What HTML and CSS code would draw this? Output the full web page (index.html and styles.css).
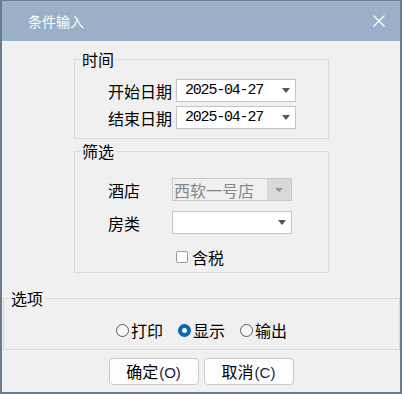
FILE: index.html
```html
<!DOCTYPE html>
<html lang="zh">
<head>
<meta charset="utf-8">
<title>条件输入</title>
<link rel="stylesheet" href="styles.css">
</head>
<body>
<div class="window">
  <div class="titlebar">
    <span class="title">条件输入</span>
    <svg class="close" width="12" height="12" viewBox="0 0 12 12"><path d="M0.5 0.5 L11.5 11.5 M11.5 0.5 L0.5 11.5" stroke="#fff" stroke-width="1.3" fill="none"/></svg>
  </div>
  <div class="content">
    <fieldset class="group group-time">
      <legend>时间</legend>
      <div class="group-body time-body">
        <div class="row date-row">
          <span class="label">开始日期</span>
          <div class="combo"><span class="date">2025-04-27</span><i class="arrow"></i></div>
        </div>
        <div class="row date-row">
          <span class="label">结束日期</span>
          <div class="combo"><span class="date">2025-04-27</span><i class="arrow"></i></div>
        </div>
      </div>
    </fieldset>
    <fieldset class="group group-filter">
      <legend>筛选</legend>
      <div class="group-body filter-body">
        <div class="row filter-row">
          <span class="label">酒店</span>
          <div class="combo combo-disabled"><span class="value">西软一号店</span><span class="drop"><i class="arrow arrow-light"></i></span></div>
        </div>
        <div class="row filter-row">
          <span class="label">房类</span>
          <div class="combo"><span class="value"></span><i class="arrow"></i></div>
        </div>
        <div class="check-row"><span class="checkbox"></span><span>含税</span></div>
      </div>
    </fieldset>
    <fieldset class="group group-options">
      <legend>选项</legend>
      <div class="group-body options-body">
        <span class="radio-item"><span class="radio"></span>打印</span>
        <span class="radio-item"><span class="radio radio-on"></span>显示</span>
        <span class="radio-item"><span class="radio"></span>输出</span>
      </div>
    </fieldset>
    <div class="buttons">
      <button class="btn">确定<span class="key">(O)</span></button>
      <button class="btn">取消<span class="key">(C)</span></button>
    </div>
  </div>
</div>
</body>
</html>
```
FILE: styles.css
```css
* { box-sizing: border-box; }
html, body { margin: 0; padding: 0; }
body {
  width: 402px;
  height: 394px;
  background: #f0f0f0;
  font-family: "Noto Sans CJK SC", "Noto Sans", sans-serif;
  font-size: 16px;
  color: #000;
}
.window {
  width: 402px;
  height: 394px;
  border: 2px solid #6b7c8d;
  border-top-width: 1px;
  background: #f0f0f0;
  display: flex;
  flex-direction: column;
}
.titlebar {
  height: 40px;
  flex: none;
  background: #99b0c8;
  color: #fff;
  font-size: 14px;
  line-height: 20px;
  display: flex;
  align-items: center;
  justify-content: space-between;
  padding: 0 15px 0 26px;
}
.close { display: block; }
.content {
  flex: 1;
  display: flex;
  flex-direction: column;
}
.group {
  border: 1px solid #dadada;
  margin: 0;
  padding: 0;
  min-width: 0;
}
.group legend {
  margin-left: 5px;
  padding: 0 2px;
  font-size: 16px;
  line-height: 20px;
}
.group-time {
  width: 255px;
  margin: 8px 0 0 72px;
}
.time-body {
  padding: 10px 0 9px 33px;
  display: flex;
  flex-direction: column;
  gap: 4px;
}
.row {
  display: grid;
  align-items: center;
  line-height: 20px;
}
.date-row { grid-template-columns: 64px 120px; column-gap: 4px; }
.combo {
  height: 23px;
  border: 1px solid #c4c4c4;
  background: #fff;
  display: flex;
  align-items: center;
  justify-content: space-between;
  padding: 0 5px 0 8px;
}
.date {
  font-family: "Liberation Mono", "DejaVu Sans Mono", monospace;
  font-size: 15px;
  letter-spacing: -1.2px;
  line-height: 20px;
}
.arrow {
  width: 0;
  height: 0;
  border-left: 4px solid transparent;
  border-right: 4px solid transparent;
  border-top: 5px solid #4b584b;
}
.group-filter {
  width: 255px;
  margin: 2px 0 0 72px;
}
.filter-body {
  padding: 17px 0 5px 33px;
  display: flex;
  flex-direction: column;
  gap: 10px;
}
.filter-row { grid-template-columns: 64px 120px; }
.filter-row .combo { padding-left: 1px; }
.combo-disabled {
  background: #f0f0f0;
  border-color: #c8c8c8;
  padding: 0 0 0 1px;
  color: #858585;
}
.combo-disabled .value { font-size: 16px; line-height: 20px; }
.drop {
  width: 24px;
  align-self: stretch;
  background: #d9d9d9;
  display: flex;
  align-items: center;
  justify-content: center;
}
.arrow-light {
  border-top: 4px solid #8a978a;
}
.check-row {
  margin-top: 3px;
  padding-left: 68px;
  display: flex;
  align-items: center;
  line-height: 20px;
}
.checkbox {
  width: 12px;
  height: 12px;
  border: 1px solid #9c9c9c;
  border-radius: 2px;
  background: #fff;
  margin-right: 4px;
}
.group-options {
  width: 397px;
  margin: 15px 0 0 1px;
}
.options-body {
  padding: 12px 0 9px;
  display: flex;
  justify-content: center;
  gap: 15px;
  line-height: 20px;
}
.radio-item {
  display: flex;
  align-items: center;
}
.radio {
  width: 13px;
  height: 13px;
  border: 1px solid #5c5c5c;
  border-radius: 50%;
  background: #f6f6f6;
  margin-right: 2px;
}
.radio-on {
  border: 4px solid #0a64c0;
  background: #fff;
}
.buttons {
  margin-top: 8px;
  display: flex;
  justify-content: center;
  gap: 5px;
}
.btn {
  width: 90px;
  height: 27px;
  border: 1px solid #cacaca;
  border-radius: 4px;
  background: #fdfdfd;
  font-family: "Noto Sans CJK SC", "Noto Sans", sans-serif;
  font-size: 16px;
  line-height: 20px;
  color: #000;
  padding: 0;
}
.key {
  font-family: "Liberation Sans", sans-serif;
  font-size: 15px;
  margin-left: 1px;
  color: #1a1a3a;
}
```
